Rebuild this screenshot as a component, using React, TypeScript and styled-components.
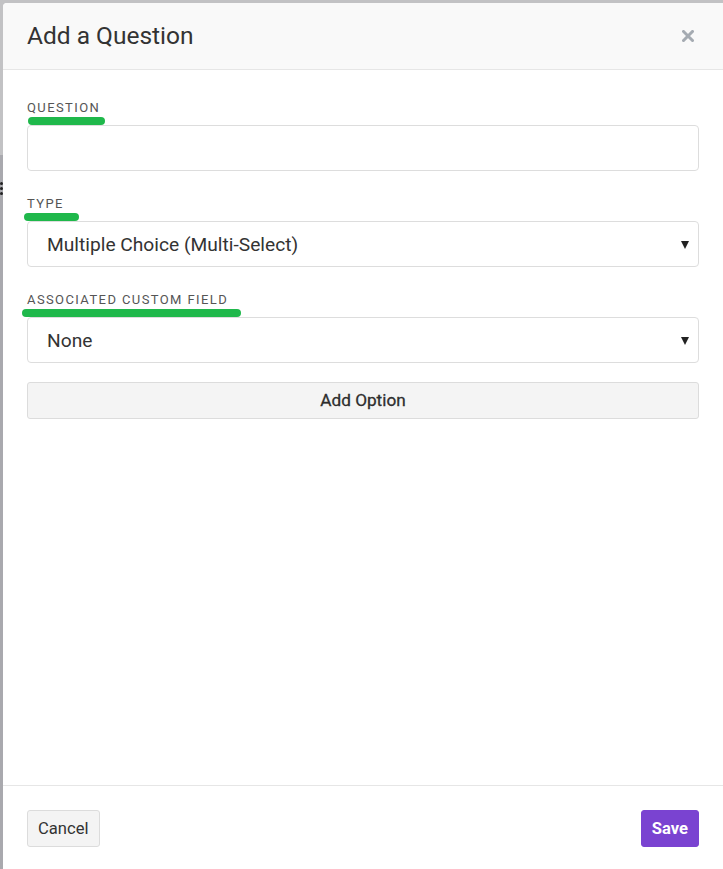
import React from 'react'
import styled, { createGlobalStyle } from 'styled-components'

const GlobalStyle = createGlobalStyle`
  html, body {
    margin: 0;
    padding: 0;
    background: #b9b9bc;
  }
  * {
    box-sizing: border-box;
  }
`

const Backdrop = styled.div`
  position: relative;
  min-height: 100vh;
  display: flex;
  flex-direction: column;
  padding: 3px 0 0 3px;
  background: linear-gradient(180deg, #c2c2c4 0, #c2c2c4 155px, #a9a9ae 155px);
  font-family: Roboto, 'Liberation Sans', sans-serif;
`

const Grip = styled.div`
  position: absolute;
  left: 0;
  top: 182px;
  width: 3px;
  display: flex;
  flex-direction: column;
  gap: 2px;

  span {
    display: block;
    width: 3px;
    height: 3px;
    border-radius: 50%;
    background: #222;
  }
`

const Modal = styled.div`
  flex: 1;
  display: flex;
  flex-direction: column;
  background: #ffffff;
  border-top-left-radius: 4px;
  overflow: hidden;
`

const Header = styled.div`
  height: 67px;
  display: flex;
  align-items: center;
  justify-content: space-between;
  padding: 0 29px 0 24px;
  background: #f9f9f9;
  border-bottom: 1px solid #e6e6e6;
`

const Title = styled.h2`
  margin: 0;
  font-size: 24.5px;
  font-weight: 400;
  color: #333333;
  line-height: 1;
  padding-top: 1px;
`

const CloseButton = styled.button`
  border: 0;
  padding: 0;
  background: none;
  width: 12px;
  height: 12px;
  display: flex;
  cursor: pointer;
`

const Body = styled.div`
  flex: 1;
  display: flex;
  flex-direction: column;
  padding: 29px 24px 0;
`

const Field = styled.div`
  display: flex;
  flex-direction: column;
  margin-bottom: 24px;
`

const Label = styled.label<{ $markLeft: number; $markWidth: number; $markTop: number }>`
  position: relative;
  font-size: 13px;
  line-height: 18px;
  letter-spacing: 1.4px;
  color: #555555;
  text-transform: uppercase;
  margin-bottom: 8px;

  &::after {
    content: '';
    position: absolute;
    left: ${({ $markLeft }) => $markLeft}px;
    top: ${({ $markTop }) => $markTop}px;
    width: ${({ $markWidth }) => $markWidth}px;
    height: 8px;
    border-radius: 4px;
    background: #1fb84b;
    z-index: 1;
  }
`

const TextInput = styled.input`
  height: 46px;
  width: 100%;
  border: 1px solid #dddddd;
  border-radius: 4px;
  padding: 0 19px;
  font-family: inherit;
  font-size: 19px;
  color: #333333;
  outline: none;
`

const SelectBox = styled.div`
  height: 46px;
  display: flex;
  align-items: center;
  justify-content: space-between;
  border: 1px solid #dddddd;
  border-radius: 4px;
  padding: 0 9px 0 19px;
  font-size: 19.2px;
  color: #333333;
`

const Arrow = styled.span`
  width: 0;
  height: 0;
  border-left: 4px solid transparent;
  border-right: 4px solid transparent;
  border-top: 8px solid #222222;
  margin-top: 1px;
`

const Button = styled.button<{ $primary?: boolean }>`
  height: 37px;
  padding: 0 10px;
  border-radius: 3px;
  font-family: inherit;
  font-size: 16.6px;
  cursor: pointer;
  font-weight: ${({ $primary }) => ($primary ? 700 : 400)};
  color: ${({ $primary }) => ($primary ? '#ffffff' : '#333333')};
  background: ${({ $primary }) => ($primary ? '#7a43d1' : '#f4f4f4')};
  border: 1px solid ${({ $primary }) => ($primary ? '#7a43d1' : '#dcdcdc')};
`

const AddOption = styled(Button)`
  width: 100%;
  margin-top: -5px;
  padding-bottom: 2px;
  font-size: 17.2px;
  color: #2e2e2e;
  -webkit-text-stroke: 0.3px #2e2e2e;
`

const Footer = styled.div`
  display: flex;
  justify-content: space-between;
  padding: 24px 24px 22px;
  border-top: 1px solid #e6e6e6;
`

const App = () => {
  return (
    <>
      <GlobalStyle />
      <Backdrop>
        <Grip>
          <span />
          <span />
          <span />
        </Grip>
        <Modal>
          <Header>
            <Title>Add a Question</Title>
            <CloseButton aria-label="Close">
              <svg width="12" height="12" viewBox="0 0 12 12">
                <path d="M1.5 1.5 L10.5 10.5 M10.5 1.5 L1.5 10.5" stroke="#a5abb2" strokeWidth="3" strokeLinecap="square" />
              </svg>
            </CloseButton>
          </Header>
          <Body>
            <Field>
              <Label $markLeft={1} $markWidth={77} $markTop={18}>Question</Label>
              <TextInput />
            </Field>
            <Field>
              <Label $markLeft={-3} $markWidth={55} $markTop={18}>Type</Label>
              <SelectBox>
                Multiple Choice (Multi-Select)
                <Arrow />
              </SelectBox>
            </Field>
            <Field>
              <Label $markLeft={-5} $markWidth={219} $markTop={18}>Associated Custom Field</Label>
              <SelectBox>
                None
                <Arrow />
              </SelectBox>
            </Field>
            <AddOption>Add Option</AddOption>
          </Body>
          <Footer>
            <Button>Cancel</Button>
            <Button $primary>Save</Button>
          </Footer>
        </Modal>
      </Backdrop>
    </>
  )
}

export default App
